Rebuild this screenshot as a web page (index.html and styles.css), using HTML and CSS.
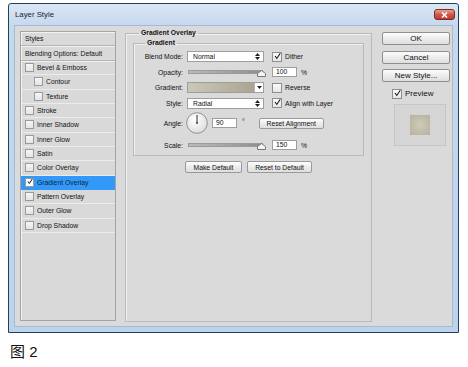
FILE: index.html
```html
<!DOCTYPE html>
<html lang="zh">
<head>
  <meta charset="UTF-8">
  <title>Layer Style</title>
  <link rel="stylesheet" href="styles.css">
</head>
<body>
  <div class="window">
    <div class="titlebar">
      <span class="title">Layer Style</span>
      <span class="close">
        <svg width="7" height="6" viewBox="0 0 7 6"><path d="M1 0.5 L6 5.5 M6 0.5 L1 5.5" stroke="#fff" stroke-width="1.6"/></svg>
      </span>
    </div>
    <div class="client">
      <div class="styles-panel">
        <div class="panel-head">Styles</div>
        <div class="panel-head blend">Blending Options: Default</div>
        <div class="item"><span class="cb"></span>Bevel &amp; Emboss</div>
        <div class="item sub"><span class="cb"></span>Contour</div>
        <div class="item sub"><span class="cb"></span>Texture</div>
        <div class="item"><span class="cb"></span>Stroke</div>
        <div class="item"><span class="cb"></span>Inner Shadow</div>
        <div class="item"><span class="cb"></span>Inner Glow</div>
        <div class="item"><span class="cb"></span>Satin</div>
        <div class="item"><span class="cb"></span>Color Overlay</div>
        <div class="item active"><span class="cb"><svg width="9" height="9" viewBox="0 0 9 9"><path d="M1.5 4.5 L3.5 7.5 L8 0.5" stroke="#111" stroke-width="1.5" fill="none"/></svg></span>Gradient Overlay</div>
        <div class="item"><span class="cb"></span>Pattern Overlay</div>
        <div class="item"><span class="cb"></span>Outer Glow</div>
        <div class="item"><span class="cb"></span>Drop Shadow</div>
      </div>

      <fieldset class="group">
        <legend>Gradient Overlay</legend>
        <fieldset class="group inner">
          <legend>Gradient</legend>
          <div class="form">
            <label>Blend Mode:</label>
            <div class="ctl">
              <span class="select">Normal<svg class="updown" width="5" height="7" viewBox="0 0 5 7"><path d="M0 3 L2.5 0 L5 3 Z M0 4 L2.5 7 L5 4 Z" fill="#222"/></svg></span>
              <span class="check on"><svg width="10" height="10" viewBox="0 0 10 10"><path d="M1.5 5 L4 8.5 L9 1" stroke="#111" stroke-width="1.5" fill="none"/></svg></span>
              <span class="opt">Dither</span>
            </div>

            <label>Opacity:</label>
            <div class="ctl">
              <span class="slider"><span class="track"></span><svg class="thumb" width="9" height="7" viewBox="0 0 9 7"><path d="M0.5 6.5 L0.5 3.5 L4.5 0.5 L8.5 3.5 L8.5 6.5 Z" fill="#f4f4f4" stroke="#777"/></svg></span>
              <span class="num">100</span>
              <span class="unit">%</span>
            </div>

            <label>Gradient:</label>
            <div class="ctl">
              <span class="swatch"><span class="ramp"></span><span class="drop"><svg width="5" height="3" viewBox="0 0 5 3"><path d="M0 0 L5 0 L2.5 3 Z" fill="#222"/></svg></span></span>
              <span class="check"></span>
              <span class="opt">Reverse</span>
            </div>

            <label>Style:</label>
            <div class="ctl">
              <span class="select">Radial<svg class="updown" width="5" height="7" viewBox="0 0 5 7"><path d="M0 3 L2.5 0 L5 3 Z M0 4 L2.5 7 L5 4 Z" fill="#222"/></svg></span>
              <span class="check on"><svg width="10" height="10" viewBox="0 0 10 10"><path d="M1.5 5 L4 8.5 L9 1" stroke="#111" stroke-width="1.5" fill="none"/></svg></span>
              <span class="opt">Align with Layer</span>
            </div>

            <label class="tall">Angle:</label>
            <div class="ctl tall">
              <svg class="dial" width="22" height="22" viewBox="0 0 22 22">
                <defs>
                  <radialGradient id="dialfill" cx="0.4" cy="0.35" r="0.7">
                    <stop offset="0" stop-color="#ffffff"/>
                    <stop offset="1" stop-color="#dcdcdc"/>
                  </radialGradient>
                </defs>
                <circle cx="11" cy="11" r="10.3" fill="url(#dialfill)" stroke="#8a8a8a" stroke-width="0.9"/>
                <path d="M11 11 L11 3" stroke="#333" stroke-width="1"/>
                <circle cx="11" cy="11" r="0.9" fill="#333"/>
              </svg>
              <span class="num angle">90</span>
              <span class="unit deg">&deg;</span>
              <span class="btn small align">Reset Alignment</span>
            </div>

            <label class="scale">Scale:</label>
            <div class="ctl scale">
              <span class="slider"><span class="track"></span><svg class="thumb" width="9" height="7" viewBox="0 0 9 7"><path d="M0.5 6.5 L0.5 3.5 L4.5 0.5 L8.5 3.5 L8.5 6.5 Z" fill="#f4f4f4" stroke="#777"/></svg></span>
              <span class="num">150</span>
              <span class="unit">%</span>
            </div>
          </div>
        </fieldset>
        <div class="defaults">
          <span class="btn small make">Make Default</span>
          <span class="btn small reset">Reset to Default</span>
        </div>
      </fieldset>

      <div class="actions">
        <span class="btn big">OK</span>
        <span class="btn big">Cancel</span>
        <span class="btn big">New Style...</span>
        <div class="preview-row">
          <span class="check on"><svg width="10" height="10" viewBox="0 0 10 10"><path d="M1.5 5 L4 8.5 L9 1" stroke="#111" stroke-width="1.5" fill="none"/></svg></span>
          <span class="preview-label">Preview</span>
        </div>
        <div class="preview-box"><span class="preview-swatch"></span></div>
      </div>
    </div>
  </div>
  <p class="caption">图 2</p>
</body>
</html>
```

FILE: styles.css
```css
body {
  margin: 0;
  background: #fff;
  font-family: 'Liberation Sans', Arial, sans-serif;
  color: #111;
}
.window {
  box-sizing: border-box;
  width: 451px;
  height: 330px;
  margin: 3px 0 0 8px;
  padding: 0 5px 5px 5px;
  border: 1px solid #23425a;
  border-radius: 3px 3px 0 0;
  background: linear-gradient(#dbe7f5, #c4d8ee 22px, #bdd3ec);
  display: flex;
  flex-direction: column;
}
.titlebar {
  height: 21px;
  display: flex;
  align-items: flex-start;
  justify-content: space-between;
}
.title {
  margin: 6px 0 0 1px;
  font-size: 7.8px;
  color: #1b2230;
}
.close {
  box-sizing: border-box;
  width: 21px;
  height: 11px;
  margin: 5px -2px 0 0;
  border: 1px solid #7a2a22;
  border-radius: 3px;
  background: linear-gradient(#eaa395, #d0584a 50%, #c2392c);
  display: flex;
  align-items: center;
  justify-content: center;
}
.client {
  flex: 1;
  display: flex;
  align-items: flex-start;
  padding: 5px 0 0 5px;
  border: 1px solid #a6bbd1;
  background: #dadada;
}

/* styles list */
.styles-panel {
  box-sizing: border-box;
  width: 96px;
  height: 290px;
  border: 1px solid #a4a4a4;
  box-shadow: inset 1px 1px 0 #f2f2f2;
  background: #d9d9d9;
  font-size: 6.8px;
}
.panel-head {
  box-sizing: border-box;
  height: 14px;
  padding-left: 4px;
  line-height: 13px;
  border-bottom: 1px solid #b4b4b4;
  box-shadow: 0 1px 0 #f0f0f0;
}
.panel-head.blend {
  margin-top: 1px;
}
.item {
  box-sizing: border-box;
  height: 14.33px;
  padding-left: 4px;
  display: flex;
  align-items: center;
  border-bottom: 1px solid #ececec;
}
.item.sub {
  padding-left: 13px;
}
.item.active {
  background: #3399f8;
  color: #0f1f3a;
  border-bottom-color: #3399f8;
}
.cb {
  box-sizing: border-box;
  width: 9px;
  height: 9px;
  margin-right: 3px;
  border: 1px solid #9a9a9a;
  background: linear-gradient(#f6f6f6, #e4e4e4);
  display: inline-flex;
  align-items: center;
  justify-content: center;
}
.item.active .cb {
  background: #fff;
}
.item.active .cb svg {
  margin: -2px 0 0 1px;
}

/* fieldsets */
.group {
  box-sizing: border-box;
  width: 247px;
  height: 293px;
  margin: -2px 0 0 9px;
  padding: 2px 7px 0 7px;
  border: 1px solid #b9b9b9;
  box-shadow: inset 1px 1px 0 #efefef;
  min-width: 0;
}
.group legend {
  margin-left: 6px;
  padding: 0 2px;
  font-size: 6.8px;
  line-height: 8px;
  font-weight: bold;
}
.group.inner {
  width: auto;
  height: auto;
  margin: 0;
  padding: 2px 0 3px 0;
}
.group.inner legend {
  margin-left: 11px;
}
.form {
  display: grid;
  grid-template-columns: 49px 1fr;
  grid-template-rows: 15.5px 15.5px 15.5px 15.5px 24px 17px;
  column-gap: 4px;
  font-size: 6.8px;
}
.form label {
  text-align: right;
  align-self: center;
}
.form .scale {
  margin-top: 3px;
}
.ctl {
  display: flex;
  align-items: center;
}
.select {
  box-sizing: border-box;
  width: 77px;
  height: 11px;
  padding: 0 3px 0 5px;
  border: 1px solid #9e9e9e;
  background: #fff;
  display: flex;
  align-items: center;
  justify-content: space-between;
}
.check {
  box-sizing: border-box;
  width: 10px;
  height: 10px;
  margin-left: 8px;
  border: 1px solid #8e8e8e;
  background: linear-gradient(#fbfbfb, #e6e6e6);
  display: inline-flex;
  align-items: center;
  justify-content: center;
}
.check.on svg {
  margin: -2px 0 0 1px;
}
.opt {
  margin-left: 3px;
}
.slider {
  position: relative;
  width: 79px;
  height: 9px;
}
.track {
  position: absolute;
  left: 1px;
  right: 3px;
  top: 2px;
  height: 2px;
  border: 1px solid #9a9a9a;
  background: linear-gradient(90deg, #bcbcbc, #8e8e8e);
}
.thumb {
  position: absolute;
  right: 0;
  top: 2px;
}
.num {
  box-sizing: border-box;
  width: 25px;
  height: 10px;
  margin-left: 6px;
  padding-left: 3px;
  border: 1px solid #9e9e9e;
  background: #fff;
  line-height: 8px;
}
.unit {
  margin-left: 4px;
}
.swatch {
  box-sizing: border-box;
  width: 77px;
  height: 11px;
  border: 1px solid #9e9e9e;
  display: flex;
  background: #fff;
}
.ramp {
  flex: 1;
  background: linear-gradient(90deg, #cbc8b8, #a9a591);
}
.drop {
  width: 8px;
  display: flex;
  align-items: center;
  justify-content: center;
  border-left: 1px solid #b5b5b5;
}
.dial {
  margin-left: -1px;
}
.num.angle {
  margin-left: 4px;
}
.unit.deg {
  margin-left: 5px;
  align-self: flex-start;
  margin-top: 7px;
}
.btn {
  box-sizing: border-box;
  display: flex;
  align-items: center;
  justify-content: center;
  border: 1px solid #9a9a9a;
  border-radius: 2px;
  background: linear-gradient(#fdfdfd, #ececec 50%, #dedede);
  color: #111;
}
.btn.small {
  height: 11px;
  font-size: 6.8px;
}
.btn.align {
  width: 65px;
  margin-left: 14px;
}
.defaults {
  display: flex;
  justify-content: center;
  gap: 5px;
  margin-top: 5px;
}
.btn.make {
  width: 57px;
  height: 12px;
}
.btn.reset {
  width: 65px;
  height: 12px;
}

/* right column */
.actions {
  width: 68px;
  margin-left: 10px;
  padding-top: 1px;
  display: flex;
  flex-direction: column;
}
.btn.big {
  height: 13px;
  margin-bottom: 5.5px;
  font-size: 8px;
  border-color: #8f8f8f;
}
.preview-row {
  display: flex;
  align-items: center;
  height: 12px;
}
.preview-row .check {
  margin-left: 10px;
}
.preview-label {
  margin-left: 3px;
  font-size: 8px;
}
.preview-box {
  box-sizing: border-box;
  width: 52px;
  height: 42px;
  margin: 4px 0 0 12px;
  border: 1px solid #c6c6c6;
  background: #d5d5d5;
  display: flex;
  align-items: center;
  justify-content: center;
}
.preview-swatch {
  width: 20px;
  height: 20px;
  background: radial-gradient(circle, #cfcbb8, #b5b19d);
}

.caption {
  margin: 9px 0 0 10px;
  font-family: 'Liberation Sans', 'Noto Sans CJK SC', sans-serif;
  font-size: 15px;
  line-height: 20px;
  color: #111;
}
```
